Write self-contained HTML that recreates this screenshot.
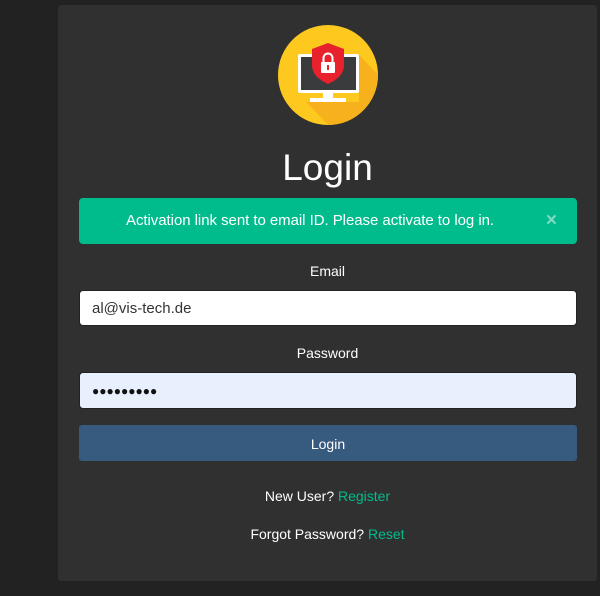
<!DOCTYPE html>
<html><head><style>
body{margin:0;width:600px;height:596px;background:#222;font-family:"Liberation Sans",sans-serif;position:relative;overflow:hidden}
.card{position:absolute;left:58px;top:5px;width:539px;height:576px;background:#303030;border-radius:3px}
.abs{position:absolute}
.c{left:58px;width:539px;text-align:center;color:#fff}
</style></head><body>
<div class="card"></div>
<svg class="abs" style="left:278px;top:25px" width="100" height="100" viewBox="0 0 100 100">
<defs><clipPath id="cc"><circle cx="50" cy="50" r="50"/></clipPath></defs>
<circle cx="50" cy="50" r="50" fill="#fdc91e"/>
<polygon clip-path="url(#cc)" points="81,30 110,60 110,110 60,110 28,77 81,77" fill="#f7b11c"/>
<rect x="20" y="29" width="61" height="39" rx="2" fill="#fff"/>
<rect x="23" y="32" width="55" height="33" fill="#3a3b3d"/>
<rect x="45" y="68" width="10" height="6" fill="#fff"/>
<rect x="32" y="73" width="36" height="4" fill="#fff"/>
<path d="M50 18 L66 24 V40 Q66 52 50 59 Q34 52 34 40 V24 Z" fill="#e8222d"/>
<rect x="43" y="37" width="14" height="11" rx="1" fill="#fff"/>
<path d="M45.5 37 V33 a4.5 4.5 0 0 1 9 0 V37" fill="none" stroke="#fff" stroke-width="2"/>
<rect x="49" y="40" width="2" height="5" fill="#e8222d"/>
</svg>
<div class="abs c" style="top:143px;font-size:37px;line-height:50px">Login</div>
<div class="abs" style="left:79px;top:198px;width:498px;height:46px;background:#00bc8c;border-radius:4px;color:#fff;font-size:15px;line-height:46px">
<span style="position:absolute;left:47px;letter-spacing:-0.05px">Activation link sent to email ID. Please activate to log in.</span>
<span style="position:absolute;right:20px;font-size:19px;color:#7fdcc4;font-weight:bold">×</span></div>
<div class="abs c" style="top:263px;font-size:14px">Email</div>
<div class="abs" style="left:79px;top:290px;width:496px;height:34px;background:#fff;border:1px solid #222;border-radius:4px;font-size:15px;line-height:36px;color:#333;text-indent:12px">al@vis-tech.de</div>
<div class="abs c" style="top:345px;font-size:14px">Password</div>
<div class="abs" style="left:79px;top:372px;width:496px;height:35px;background:#e8f0fe;border:1px solid #222;border-radius:4px;font-size:12px;line-height:36px;color:#111;text-indent:12px">●●●●●●●●●</div>
<div class="abs" style="left:79px;top:425px;width:498px;height:36px;background:#375a7f;border-radius:3px;color:#fff;font-size:14px;line-height:38px;text-align:center">Login</div>
<div class="abs c" style="top:488px;font-size:14px">New User? <span style="color:#00bc8c">Register</span></div>
<div class="abs c" style="top:526px;font-size:14px">Forgot Password? <span style="color:#00bc8c">Reset</span></div>
</body></html>
